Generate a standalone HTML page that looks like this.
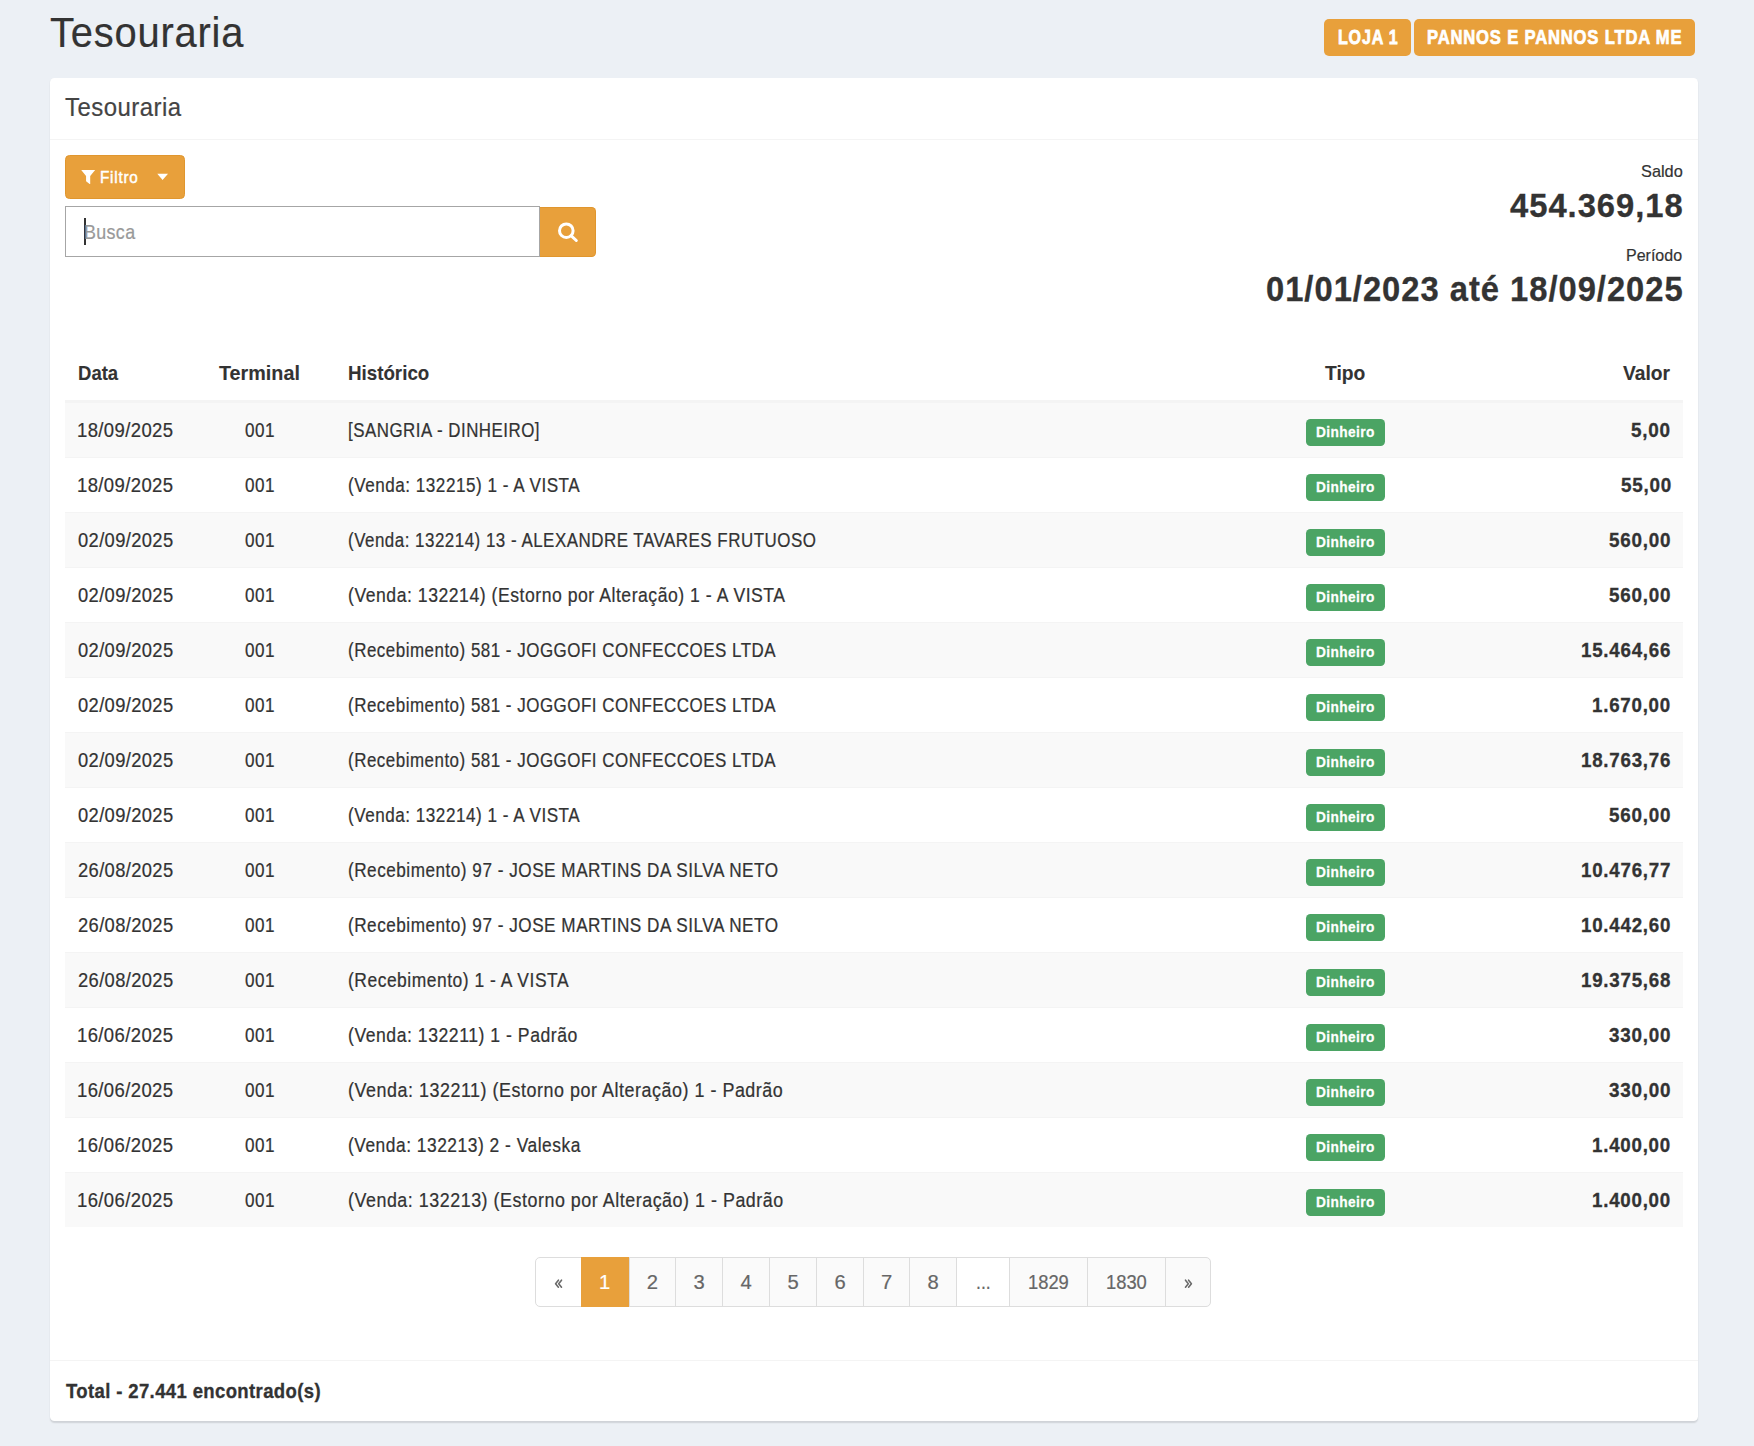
<!DOCTYPE html>
<html><head><meta charset="utf-8"><title>Tesouraria</title>
<style>
html,body{margin:0;padding:0}
body{width:1754px;height:1446px;background:#ecf0f5;position:relative;overflow:hidden;font-family:"Liberation Sans", sans-serif}
.t{position:absolute;white-space:nowrap;line-height:1;transform-origin:0 0}
</style></head><body>
<div style="position:absolute;left:1324px;top:19px;width:87px;height:37px;background:#e8a03b;border-radius:5px"></div>
<div style="position:absolute;left:1414px;top:19px;width:281px;height:37px;background:#e8a03b;border-radius:5px"></div>
<div style="position:absolute;left:50px;top:78px;width:1648px;height:1342.5px;background:#fff;border-radius:4.5px;box-shadow:0 1.5px 1.5px rgba(0,0,0,0.12)"></div>
<div style="position:absolute;left:50px;top:139px;width:1648px;height:1px;background:#f4f4f4"></div>
<div style="position:absolute;left:65px;top:155px;width:120px;height:44px;box-sizing:border-box;background:#e8a03b;border:1.5px solid #e0962e;border-radius:4.5px"></div>
<svg style="position:absolute;left:81px;top:170px" width="15" height="15" viewBox="0 0 15 15"><path d="M0.2 0 H14.15 L9.2 6.05 V14.1 L8.6 14.1 L5.07 11.2 V6.05 Z" fill="#fff"/></svg>
<svg style="position:absolute;left:157px;top:173px" width="12" height="8" viewBox="0 0 12 8"><path d="M0.26 0.8 H11 L5.6 6.9 Z" fill="#fff"/></svg>
<div style="position:absolute;left:65px;top:206px;width:475px;height:51px;box-sizing:border-box;background:#fff;border:1px solid #a6a6a6;border-width:1.2px 1px 1.2px 1.2px"></div>
<div style="position:absolute;left:84px;top:218px;width:2px;height:27px;background:#333"></div>
<div style="position:absolute;left:540px;top:207px;width:56px;height:50px;box-sizing:border-box;background:#e8a03b;border:1.2px solid #e0962e;border-left:0;border-radius:0 4.5px 4.5px 0"></div>
<svg style="position:absolute;left:555px;top:219px" width="26" height="26" viewBox="0 0 26 26"><circle cx="11.3" cy="11.7" r="6.8" fill="none" stroke="#fff" stroke-width="3"/><path d="M16.3 16.8 L21.3 21.5" stroke="#fff" stroke-width="3" stroke-linecap="round"/></svg>
<div style="position:absolute;left:65px;top:400px;width:1618px;height:3px;background:#f4f4f4"></div>
<div style="position:absolute;left:65px;top:403px;width:1618px;height:54px;background:#f9f9f9"></div>
<div style="position:absolute;left:1306px;top:419.00px;width:79px;height:27px;background:#4ba464;border-radius:4.5px"></div>
<div style="position:absolute;left:65px;top:457px;width:1618px;height:1px;background:#f4f4f4"></div>
<div style="position:absolute;left:1306px;top:474.00px;width:79px;height:27px;background:#4ba464;border-radius:4.5px"></div>
<div style="position:absolute;left:65px;top:513px;width:1618px;height:54px;background:#f9f9f9"></div>
<div style="position:absolute;left:65px;top:512px;width:1618px;height:1px;background:#f4f4f4"></div>
<div style="position:absolute;left:1306px;top:529.00px;width:79px;height:27px;background:#4ba464;border-radius:4.5px"></div>
<div style="position:absolute;left:65px;top:567px;width:1618px;height:1px;background:#f4f4f4"></div>
<div style="position:absolute;left:1306px;top:584.00px;width:79px;height:27px;background:#4ba464;border-radius:4.5px"></div>
<div style="position:absolute;left:65px;top:623px;width:1618px;height:54px;background:#f9f9f9"></div>
<div style="position:absolute;left:65px;top:622px;width:1618px;height:1px;background:#f4f4f4"></div>
<div style="position:absolute;left:1306px;top:639.00px;width:79px;height:27px;background:#4ba464;border-radius:4.5px"></div>
<div style="position:absolute;left:65px;top:677px;width:1618px;height:1px;background:#f4f4f4"></div>
<div style="position:absolute;left:1306px;top:694.00px;width:79px;height:27px;background:#4ba464;border-radius:4.5px"></div>
<div style="position:absolute;left:65px;top:733px;width:1618px;height:54px;background:#f9f9f9"></div>
<div style="position:absolute;left:65px;top:732px;width:1618px;height:1px;background:#f4f4f4"></div>
<div style="position:absolute;left:1306px;top:749.00px;width:79px;height:27px;background:#4ba464;border-radius:4.5px"></div>
<div style="position:absolute;left:65px;top:787px;width:1618px;height:1px;background:#f4f4f4"></div>
<div style="position:absolute;left:1306px;top:804.00px;width:79px;height:27px;background:#4ba464;border-radius:4.5px"></div>
<div style="position:absolute;left:65px;top:843px;width:1618px;height:54px;background:#f9f9f9"></div>
<div style="position:absolute;left:65px;top:842px;width:1618px;height:1px;background:#f4f4f4"></div>
<div style="position:absolute;left:1306px;top:859.00px;width:79px;height:27px;background:#4ba464;border-radius:4.5px"></div>
<div style="position:absolute;left:65px;top:897px;width:1618px;height:1px;background:#f4f4f4"></div>
<div style="position:absolute;left:1306px;top:914.00px;width:79px;height:27px;background:#4ba464;border-radius:4.5px"></div>
<div style="position:absolute;left:65px;top:953px;width:1618px;height:54px;background:#f9f9f9"></div>
<div style="position:absolute;left:65px;top:952px;width:1618px;height:1px;background:#f4f4f4"></div>
<div style="position:absolute;left:1306px;top:969.00px;width:79px;height:27px;background:#4ba464;border-radius:4.5px"></div>
<div style="position:absolute;left:65px;top:1007px;width:1618px;height:1px;background:#f4f4f4"></div>
<div style="position:absolute;left:1306px;top:1024.00px;width:79px;height:27px;background:#4ba464;border-radius:4.5px"></div>
<div style="position:absolute;left:65px;top:1063px;width:1618px;height:54px;background:#f9f9f9"></div>
<div style="position:absolute;left:65px;top:1062px;width:1618px;height:1px;background:#f4f4f4"></div>
<div style="position:absolute;left:1306px;top:1079.00px;width:79px;height:27px;background:#4ba464;border-radius:4.5px"></div>
<div style="position:absolute;left:65px;top:1117px;width:1618px;height:1px;background:#f4f4f4"></div>
<div style="position:absolute;left:1306px;top:1134.00px;width:79px;height:27px;background:#4ba464;border-radius:4.5px"></div>
<div style="position:absolute;left:65px;top:1173px;width:1618px;height:54px;background:#f9f9f9"></div>
<div style="position:absolute;left:65px;top:1172px;width:1618px;height:1px;background:#f4f4f4"></div>
<div style="position:absolute;left:1306px;top:1189.00px;width:79px;height:27px;background:#4ba464;border-radius:4.5px"></div>
<div style="position:absolute;left:535.30px;top:1257px;width:45.80px;height:49.5px;background:#fff;border-radius:5px 0 0 5px"></div>
<div style="position:absolute;left:629.00px;top:1257px;width:46.50px;height:49.5px;background:#fafafa;border-radius:0"></div>
<div style="position:absolute;left:628.50px;top:1257px;width:1px;height:49.5px;background:#ddd"></div>
<div style="position:absolute;left:675.50px;top:1257px;width:47.00px;height:49.5px;background:#fafafa;border-radius:0"></div>
<div style="position:absolute;left:675.00px;top:1257px;width:1px;height:49.5px;background:#ddd"></div>
<div style="position:absolute;left:722.50px;top:1257px;width:46.90px;height:49.5px;background:#fafafa;border-radius:0"></div>
<div style="position:absolute;left:722.00px;top:1257px;width:1px;height:49.5px;background:#ddd"></div>
<div style="position:absolute;left:769.40px;top:1257px;width:47.10px;height:49.5px;background:#fafafa;border-radius:0"></div>
<div style="position:absolute;left:768.90px;top:1257px;width:1px;height:49.5px;background:#ddd"></div>
<div style="position:absolute;left:816.50px;top:1257px;width:47.00px;height:49.5px;background:#fafafa;border-radius:0"></div>
<div style="position:absolute;left:816.00px;top:1257px;width:1px;height:49.5px;background:#ddd"></div>
<div style="position:absolute;left:863.50px;top:1257px;width:46.10px;height:49.5px;background:#fafafa;border-radius:0"></div>
<div style="position:absolute;left:863.00px;top:1257px;width:1px;height:49.5px;background:#ddd"></div>
<div style="position:absolute;left:909.60px;top:1257px;width:46.90px;height:49.5px;background:#fafafa;border-radius:0"></div>
<div style="position:absolute;left:909.10px;top:1257px;width:1px;height:49.5px;background:#ddd"></div>
<div style="position:absolute;left:956.50px;top:1257px;width:52.90px;height:49.5px;background:#fff;border-radius:0"></div>
<div style="position:absolute;left:956.00px;top:1257px;width:1px;height:49.5px;background:#ddd"></div>
<div style="position:absolute;left:1009.40px;top:1257px;width:78.30px;height:49.5px;background:#fafafa;border-radius:0"></div>
<div style="position:absolute;left:1008.90px;top:1257px;width:1px;height:49.5px;background:#ddd"></div>
<div style="position:absolute;left:1087.70px;top:1257px;width:77.90px;height:49.5px;background:#fafafa;border-radius:0"></div>
<div style="position:absolute;left:1087.20px;top:1257px;width:1px;height:49.5px;background:#ddd"></div>
<div style="position:absolute;left:1165.60px;top:1257px;width:45.80px;height:49.5px;background:#fafafa;border-radius:0 5px 5px 0"></div>
<div style="position:absolute;left:1165.10px;top:1257px;width:1px;height:49.5px;background:#ddd"></div>
<div style="position:absolute;left:535.3px;top:1257px;width:676.1px;height:49.5px;box-sizing:border-box;border:1px solid #ddd;border-top-width:1.3px;border-bottom-width:1.3px;border-radius:5px"></div>
<div style="position:absolute;left:580.80px;top:1256.8px;width:48.20px;height:49.9px;background:#e8a03b"></div>
<svg style="position:absolute;left:554px;top:1279px" width="10" height="10" viewBox="0 0 10 10"><path d="M4.4 1.2 L1.6 4.7 L4.4 8.2 M7.5 1.2 L4.7 4.7 L7.5 8.2" fill="none" stroke="#6a6a6a" stroke-width="1.6" stroke-linejoin="round" stroke-linecap="round"/></svg>
<svg style="position:absolute;left:1183px;top:1279px" width="10" height="10" viewBox="0 0 10 10"><path d="M2.5 1.2 L5.3 4.7 L2.5 8.2 M5.6 1.2 L8.4 4.7 L5.6 8.2" fill="none" stroke="#6a6a6a" stroke-width="1.6" stroke-linejoin="round" stroke-linecap="round"/></svg>
<div style="position:absolute;left:50px;top:1360px;width:1648px;height:1px;background:#f4f4f4"></div>
<div class="t" style="left:50.20px;top:10.90px;font-size:42.7px;font-weight:400;color:#333333;transform:scaleX(0.9346);letter-spacing:0.85px;-webkit-text-stroke:0.21px #333333">Tesouraria</div>
<div class="t" style="left:1338.00px;top:26.90px;font-size:20.5px;font-weight:700;color:#fff;transform:scaleX(0.7829);letter-spacing:1.03px;-webkit-text-stroke:0.77px #fff">LOJA 1</div>
<div class="t" style="left:1427.40px;top:26.90px;font-size:20.5px;font-weight:700;color:#fff;transform:scaleX(0.8091);letter-spacing:1.03px;-webkit-text-stroke:0.74px #fff">PANNOS E PANNOS LTDA ME</div>
<div class="t" style="left:65.00px;top:95.00px;font-size:25.3px;font-weight:400;color:#444;transform:scaleX(0.9470);letter-spacing:0.51px;-webkit-text-stroke:0.21px #444">Tesouraria</div>
<div class="t" style="left:100.00px;top:169.00px;font-size:17px;font-weight:400;color:#fff;transform:scaleX(0.8994);letter-spacing:0.85px;-webkit-text-stroke:0.50px #fff">Filtro</div>
<div class="t" style="left:83.61px;top:221.80px;font-size:20.2px;font-weight:400;color:#999;transform:scaleX(0.8852);letter-spacing:0.40px;-webkit-text-stroke:0.23px #999">Busca</div>
<div class="t" style="left:1640.60px;top:163.00px;font-size:16.4px;font-weight:400;color:#333333;transform:scaleX(0.9952);letter-spacing:0.00px;-webkit-text-stroke:0.20px #333333">Saldo</div>
<div class="t" style="left:1509.80px;top:188.00px;font-size:34px;font-weight:700;color:#333333;transform:scaleX(0.9633);letter-spacing:1.02px;-webkit-text-stroke:0.31px #333333">454.369,18</div>
<div class="t" style="left:1625.80px;top:247.00px;font-size:16.4px;font-weight:400;color:#333333;transform:scaleX(0.9759);letter-spacing:0.00px;-webkit-text-stroke:0.20px #333333">Período</div>
<div class="t" style="left:1265.65px;top:271.75px;font-size:34.3px;font-weight:700;color:#333333;transform:scaleX(0.9543);letter-spacing:1.03px;-webkit-text-stroke:0.31px #333333">01/01/2023 até 18/09/2025</div>
<div class="t" style="left:77.80px;top:363.00px;font-size:20.5px;font-weight:700;color:#333333;transform:scaleX(0.9044);letter-spacing:0.00px;-webkit-text-stroke:0.11px #333333">Data</div>
<div class="t" style="left:219.20px;top:363.00px;font-size:20.5px;font-weight:700;color:#333333;transform:scaleX(0.9643);letter-spacing:0.00px;-webkit-text-stroke:0.10px #333333">Terminal</div>
<div class="t" style="left:347.80px;top:363.00px;font-size:20.5px;font-weight:700;color:#333333;transform:scaleX(0.9146);letter-spacing:0.00px;-webkit-text-stroke:0.11px #333333">Histórico</div>
<div class="t" style="left:1325.30px;top:363.00px;font-size:20.5px;font-weight:700;color:#333333;transform:scaleX(0.9395);letter-spacing:0.00px;-webkit-text-stroke:0.11px #333333">Tipo</div>
<div class="t" style="left:1623.40px;top:363.00px;font-size:20.5px;font-weight:700;color:#333333;transform:scaleX(0.9392);letter-spacing:0.00px;-webkit-text-stroke:0.11px #333333">Valor</div>
<div class="t" style="left:65.60px;top:1381.00px;font-size:20.5px;font-weight:700;color:#333333;transform:scaleX(0.9033);letter-spacing:0.41px;-webkit-text-stroke:0.33px #333333">Total - 27.441 encontrado(s)</div>
<div class="t" style="left:76.90px;top:420.00px;font-size:20.5px;font-weight:400;color:#333333;transform:scaleX(0.9036);letter-spacing:0.41px;-webkit-text-stroke:0.22px #333333">18/09/2025</div>
<div class="t" style="left:244.50px;top:420.00px;font-size:20.5px;font-weight:400;color:#333333;transform:scaleX(0.8345);letter-spacing:0.61px;-webkit-text-stroke:0.24px #333333">001</div>
<div class="t" style="left:347.80px;top:420.00px;font-size:20.5px;font-weight:400;color:#333333;transform:scaleX(0.8234);letter-spacing:0.61px;-webkit-text-stroke:0.24px #333333">[SANGRIA - DINHEIRO]</div>
<div class="t" style="left:1316.40px;top:424.00px;font-size:15px;font-weight:700;color:#fff;transform:scaleX(0.9135);letter-spacing:0.45px;-webkit-text-stroke:0.27px #fff">Dinheiro</div>
<div class="t" style="left:1631.40px;top:420.00px;font-size:20.5px;font-weight:700;color:#333333;transform:scaleX(0.9232);letter-spacing:0.82px;-webkit-text-stroke:0.32px #333333">5,00</div>
<div class="t" style="left:76.90px;top:475.00px;font-size:20.5px;font-weight:400;color:#333333;transform:scaleX(0.9036);letter-spacing:0.41px;-webkit-text-stroke:0.22px #333333">18/09/2025</div>
<div class="t" style="left:244.50px;top:475.00px;font-size:20.5px;font-weight:400;color:#333333;transform:scaleX(0.8345);letter-spacing:0.61px;-webkit-text-stroke:0.24px #333333">001</div>
<div class="t" style="left:347.80px;top:475.00px;font-size:20.5px;font-weight:400;color:#333333;transform:scaleX(0.8346);letter-spacing:0.61px;-webkit-text-stroke:0.24px #333333">(Venda: 132215) 1 - A VISTA</div>
<div class="t" style="left:1316.40px;top:479.00px;font-size:15px;font-weight:700;color:#fff;transform:scaleX(0.9135);letter-spacing:0.45px;-webkit-text-stroke:0.27px #fff">Dinheiro</div>
<div class="t" style="left:1620.62px;top:475.00px;font-size:20.5px;font-weight:700;color:#333333;transform:scaleX(0.9208);letter-spacing:0.82px;-webkit-text-stroke:0.33px #333333">55,00</div>
<div class="t" style="left:77.80px;top:530.00px;font-size:20.5px;font-weight:400;color:#333333;transform:scaleX(0.8951);letter-spacing:0.41px;-webkit-text-stroke:0.22px #333333">02/09/2025</div>
<div class="t" style="left:244.50px;top:530.00px;font-size:20.5px;font-weight:400;color:#333333;transform:scaleX(0.8345);letter-spacing:0.61px;-webkit-text-stroke:0.24px #333333">001</div>
<div class="t" style="left:347.80px;top:530.00px;font-size:20.5px;font-weight:400;color:#333333;transform:scaleX(0.8257);letter-spacing:0.61px;-webkit-text-stroke:0.24px #333333">(Venda: 132214) 13 - ALEXANDRE TAVARES FRUTUOSO</div>
<div class="t" style="left:1316.40px;top:534.00px;font-size:15px;font-weight:700;color:#fff;transform:scaleX(0.9135);letter-spacing:0.45px;-webkit-text-stroke:0.27px #fff">Dinheiro</div>
<div class="t" style="left:1608.86px;top:530.00px;font-size:20.5px;font-weight:700;color:#333333;transform:scaleX(0.9201);letter-spacing:0.82px;-webkit-text-stroke:0.33px #333333">560,00</div>
<div class="t" style="left:77.80px;top:585.00px;font-size:20.5px;font-weight:400;color:#333333;transform:scaleX(0.8951);letter-spacing:0.41px;-webkit-text-stroke:0.22px #333333">02/09/2025</div>
<div class="t" style="left:244.50px;top:585.00px;font-size:20.5px;font-weight:400;color:#333333;transform:scaleX(0.8345);letter-spacing:0.61px;-webkit-text-stroke:0.24px #333333">001</div>
<div class="t" style="left:347.80px;top:585.00px;font-size:20.5px;font-weight:400;color:#333333;transform:scaleX(0.8592);letter-spacing:0.61px;-webkit-text-stroke:0.23px #333333">(Venda: 132214) (Estorno por Alteração) 1 - A VISTA</div>
<div class="t" style="left:1316.40px;top:589.00px;font-size:15px;font-weight:700;color:#fff;transform:scaleX(0.9135);letter-spacing:0.45px;-webkit-text-stroke:0.27px #fff">Dinheiro</div>
<div class="t" style="left:1608.86px;top:585.00px;font-size:20.5px;font-weight:700;color:#333333;transform:scaleX(0.9201);letter-spacing:0.82px;-webkit-text-stroke:0.33px #333333">560,00</div>
<div class="t" style="left:77.80px;top:640.00px;font-size:20.5px;font-weight:400;color:#333333;transform:scaleX(0.8951);letter-spacing:0.41px;-webkit-text-stroke:0.22px #333333">02/09/2025</div>
<div class="t" style="left:244.50px;top:640.00px;font-size:20.5px;font-weight:400;color:#333333;transform:scaleX(0.8345);letter-spacing:0.61px;-webkit-text-stroke:0.24px #333333">001</div>
<div class="t" style="left:347.80px;top:640.00px;font-size:20.5px;font-weight:400;color:#333333;transform:scaleX(0.8265);letter-spacing:0.61px;-webkit-text-stroke:0.24px #333333">(Recebimento) 581 - JOGGOFI CONFECCOES LTDA</div>
<div class="t" style="left:1316.40px;top:644.00px;font-size:15px;font-weight:700;color:#fff;transform:scaleX(0.9135);letter-spacing:0.45px;-webkit-text-stroke:0.27px #fff">Dinheiro</div>
<div class="t" style="left:1581.42px;top:640.00px;font-size:20.5px;font-weight:700;color:#333333;transform:scaleX(0.9141);letter-spacing:0.82px;-webkit-text-stroke:0.33px #333333">15.464,66</div>
<div class="t" style="left:77.80px;top:695.00px;font-size:20.5px;font-weight:400;color:#333333;transform:scaleX(0.8951);letter-spacing:0.41px;-webkit-text-stroke:0.22px #333333">02/09/2025</div>
<div class="t" style="left:244.50px;top:695.00px;font-size:20.5px;font-weight:400;color:#333333;transform:scaleX(0.8345);letter-spacing:0.61px;-webkit-text-stroke:0.24px #333333">001</div>
<div class="t" style="left:347.80px;top:695.00px;font-size:20.5px;font-weight:400;color:#333333;transform:scaleX(0.8265);letter-spacing:0.61px;-webkit-text-stroke:0.24px #333333">(Recebimento) 581 - JOGGOFI CONFECCOES LTDA</div>
<div class="t" style="left:1316.40px;top:699.00px;font-size:15px;font-weight:700;color:#fff;transform:scaleX(0.9135);letter-spacing:0.45px;-webkit-text-stroke:0.27px #fff">Dinheiro</div>
<div class="t" style="left:1592.20px;top:695.00px;font-size:20.5px;font-weight:700;color:#333333;transform:scaleX(0.9144);letter-spacing:0.82px;-webkit-text-stroke:0.33px #333333">1.670,00</div>
<div class="t" style="left:77.80px;top:750.00px;font-size:20.5px;font-weight:400;color:#333333;transform:scaleX(0.8951);letter-spacing:0.41px;-webkit-text-stroke:0.22px #333333">02/09/2025</div>
<div class="t" style="left:244.50px;top:750.00px;font-size:20.5px;font-weight:400;color:#333333;transform:scaleX(0.8345);letter-spacing:0.61px;-webkit-text-stroke:0.24px #333333">001</div>
<div class="t" style="left:347.80px;top:750.00px;font-size:20.5px;font-weight:400;color:#333333;transform:scaleX(0.8265);letter-spacing:0.61px;-webkit-text-stroke:0.24px #333333">(Recebimento) 581 - JOGGOFI CONFECCOES LTDA</div>
<div class="t" style="left:1316.40px;top:754.00px;font-size:15px;font-weight:700;color:#fff;transform:scaleX(0.9135);letter-spacing:0.45px;-webkit-text-stroke:0.27px #fff">Dinheiro</div>
<div class="t" style="left:1581.42px;top:750.00px;font-size:20.5px;font-weight:700;color:#333333;transform:scaleX(0.9141);letter-spacing:0.82px;-webkit-text-stroke:0.33px #333333">18.763,76</div>
<div class="t" style="left:77.80px;top:805.00px;font-size:20.5px;font-weight:400;color:#333333;transform:scaleX(0.8951);letter-spacing:0.41px;-webkit-text-stroke:0.22px #333333">02/09/2025</div>
<div class="t" style="left:244.50px;top:805.00px;font-size:20.5px;font-weight:400;color:#333333;transform:scaleX(0.8345);letter-spacing:0.61px;-webkit-text-stroke:0.24px #333333">001</div>
<div class="t" style="left:347.80px;top:805.00px;font-size:20.5px;font-weight:400;color:#333333;transform:scaleX(0.8346);letter-spacing:0.61px;-webkit-text-stroke:0.24px #333333">(Venda: 132214) 1 - A VISTA</div>
<div class="t" style="left:1316.40px;top:809.00px;font-size:15px;font-weight:700;color:#fff;transform:scaleX(0.9135);letter-spacing:0.45px;-webkit-text-stroke:0.27px #fff">Dinheiro</div>
<div class="t" style="left:1608.86px;top:805.00px;font-size:20.5px;font-weight:700;color:#333333;transform:scaleX(0.9201);letter-spacing:0.82px;-webkit-text-stroke:0.33px #333333">560,00</div>
<div class="t" style="left:77.80px;top:860.00px;font-size:20.5px;font-weight:400;color:#333333;transform:scaleX(0.8951);letter-spacing:0.41px;-webkit-text-stroke:0.22px #333333">26/08/2025</div>
<div class="t" style="left:244.50px;top:860.00px;font-size:20.5px;font-weight:400;color:#333333;transform:scaleX(0.8345);letter-spacing:0.61px;-webkit-text-stroke:0.24px #333333">001</div>
<div class="t" style="left:347.80px;top:860.00px;font-size:20.5px;font-weight:400;color:#333333;transform:scaleX(0.8365);letter-spacing:0.61px;-webkit-text-stroke:0.24px #333333">(Recebimento) 97 - JOSE MARTINS DA SILVA NETO</div>
<div class="t" style="left:1316.40px;top:864.00px;font-size:15px;font-weight:700;color:#fff;transform:scaleX(0.9135);letter-spacing:0.45px;-webkit-text-stroke:0.27px #fff">Dinheiro</div>
<div class="t" style="left:1581.42px;top:860.00px;font-size:20.5px;font-weight:700;color:#333333;transform:scaleX(0.9141);letter-spacing:0.82px;-webkit-text-stroke:0.33px #333333">10.476,77</div>
<div class="t" style="left:77.80px;top:915.00px;font-size:20.5px;font-weight:400;color:#333333;transform:scaleX(0.8951);letter-spacing:0.41px;-webkit-text-stroke:0.22px #333333">26/08/2025</div>
<div class="t" style="left:244.50px;top:915.00px;font-size:20.5px;font-weight:400;color:#333333;transform:scaleX(0.8345);letter-spacing:0.61px;-webkit-text-stroke:0.24px #333333">001</div>
<div class="t" style="left:347.80px;top:915.00px;font-size:20.5px;font-weight:400;color:#333333;transform:scaleX(0.8365);letter-spacing:0.61px;-webkit-text-stroke:0.24px #333333">(Recebimento) 97 - JOSE MARTINS DA SILVA NETO</div>
<div class="t" style="left:1316.40px;top:919.00px;font-size:15px;font-weight:700;color:#fff;transform:scaleX(0.9135);letter-spacing:0.45px;-webkit-text-stroke:0.27px #fff">Dinheiro</div>
<div class="t" style="left:1581.42px;top:915.00px;font-size:20.5px;font-weight:700;color:#333333;transform:scaleX(0.9141);letter-spacing:0.82px;-webkit-text-stroke:0.33px #333333">10.442,60</div>
<div class="t" style="left:77.80px;top:970.00px;font-size:20.5px;font-weight:400;color:#333333;transform:scaleX(0.8951);letter-spacing:0.41px;-webkit-text-stroke:0.22px #333333">26/08/2025</div>
<div class="t" style="left:244.50px;top:970.00px;font-size:20.5px;font-weight:400;color:#333333;transform:scaleX(0.8345);letter-spacing:0.61px;-webkit-text-stroke:0.24px #333333">001</div>
<div class="t" style="left:347.80px;top:970.00px;font-size:20.5px;font-weight:400;color:#333333;transform:scaleX(0.8508);letter-spacing:0.61px;-webkit-text-stroke:0.24px #333333">(Recebimento) 1 - A VISTA</div>
<div class="t" style="left:1316.40px;top:974.00px;font-size:15px;font-weight:700;color:#fff;transform:scaleX(0.9135);letter-spacing:0.45px;-webkit-text-stroke:0.27px #fff">Dinheiro</div>
<div class="t" style="left:1581.42px;top:970.00px;font-size:20.5px;font-weight:700;color:#333333;transform:scaleX(0.9141);letter-spacing:0.82px;-webkit-text-stroke:0.33px #333333">19.375,68</div>
<div class="t" style="left:76.90px;top:1025.00px;font-size:20.5px;font-weight:400;color:#333333;transform:scaleX(0.9036);letter-spacing:0.41px;-webkit-text-stroke:0.22px #333333">16/06/2025</div>
<div class="t" style="left:244.50px;top:1025.00px;font-size:20.5px;font-weight:400;color:#333333;transform:scaleX(0.8345);letter-spacing:0.61px;-webkit-text-stroke:0.24px #333333">001</div>
<div class="t" style="left:347.80px;top:1025.00px;font-size:20.5px;font-weight:400;color:#333333;transform:scaleX(0.8597);letter-spacing:0.61px;-webkit-text-stroke:0.23px #333333">(Venda: 132211) 1 - Padrão</div>
<div class="t" style="left:1316.40px;top:1029.00px;font-size:15px;font-weight:700;color:#fff;transform:scaleX(0.9135);letter-spacing:0.45px;-webkit-text-stroke:0.27px #fff">Dinheiro</div>
<div class="t" style="left:1608.86px;top:1025.00px;font-size:20.5px;font-weight:700;color:#333333;transform:scaleX(0.9201);letter-spacing:0.82px;-webkit-text-stroke:0.33px #333333">330,00</div>
<div class="t" style="left:76.90px;top:1080.00px;font-size:20.5px;font-weight:400;color:#333333;transform:scaleX(0.9036);letter-spacing:0.41px;-webkit-text-stroke:0.22px #333333">16/06/2025</div>
<div class="t" style="left:244.50px;top:1080.00px;font-size:20.5px;font-weight:400;color:#333333;transform:scaleX(0.8345);letter-spacing:0.61px;-webkit-text-stroke:0.24px #333333">001</div>
<div class="t" style="left:347.80px;top:1080.00px;font-size:20.5px;font-weight:400;color:#333333;transform:scaleX(0.8733);letter-spacing:0.61px;-webkit-text-stroke:0.23px #333333">(Venda: 132211) (Estorno por Alteração) 1 - Padrão</div>
<div class="t" style="left:1316.40px;top:1084.00px;font-size:15px;font-weight:700;color:#fff;transform:scaleX(0.9135);letter-spacing:0.45px;-webkit-text-stroke:0.27px #fff">Dinheiro</div>
<div class="t" style="left:1608.86px;top:1080.00px;font-size:20.5px;font-weight:700;color:#333333;transform:scaleX(0.9201);letter-spacing:0.82px;-webkit-text-stroke:0.33px #333333">330,00</div>
<div class="t" style="left:76.90px;top:1135.00px;font-size:20.5px;font-weight:400;color:#333333;transform:scaleX(0.9036);letter-spacing:0.41px;-webkit-text-stroke:0.22px #333333">16/06/2025</div>
<div class="t" style="left:244.50px;top:1135.00px;font-size:20.5px;font-weight:400;color:#333333;transform:scaleX(0.8345);letter-spacing:0.61px;-webkit-text-stroke:0.24px #333333">001</div>
<div class="t" style="left:347.80px;top:1135.00px;font-size:20.5px;font-weight:400;color:#333333;transform:scaleX(0.8473);letter-spacing:0.61px;-webkit-text-stroke:0.24px #333333">(Venda: 132213) 2 - Valeska</div>
<div class="t" style="left:1316.40px;top:1139.00px;font-size:15px;font-weight:700;color:#fff;transform:scaleX(0.9135);letter-spacing:0.45px;-webkit-text-stroke:0.27px #fff">Dinheiro</div>
<div class="t" style="left:1592.20px;top:1135.00px;font-size:20.5px;font-weight:700;color:#333333;transform:scaleX(0.9144);letter-spacing:0.82px;-webkit-text-stroke:0.33px #333333">1.400,00</div>
<div class="t" style="left:76.90px;top:1190.00px;font-size:20.5px;font-weight:400;color:#333333;transform:scaleX(0.9036);letter-spacing:0.41px;-webkit-text-stroke:0.22px #333333">16/06/2025</div>
<div class="t" style="left:244.50px;top:1190.00px;font-size:20.5px;font-weight:400;color:#333333;transform:scaleX(0.8345);letter-spacing:0.61px;-webkit-text-stroke:0.24px #333333">001</div>
<div class="t" style="left:347.80px;top:1190.00px;font-size:20.5px;font-weight:400;color:#333333;transform:scaleX(0.8715);letter-spacing:0.61px;-webkit-text-stroke:0.23px #333333">(Venda: 132213) (Estorno por Alteração) 1 - Padrão</div>
<div class="t" style="left:1316.40px;top:1194.00px;font-size:15px;font-weight:700;color:#fff;transform:scaleX(0.9135);letter-spacing:0.45px;-webkit-text-stroke:0.27px #fff">Dinheiro</div>
<div class="t" style="left:1592.20px;top:1190.00px;font-size:20.5px;font-weight:700;color:#333333;transform:scaleX(0.9144);letter-spacing:0.82px;-webkit-text-stroke:0.33px #333333">1.400,00</div>
<div class="t" style="left:599.05px;top:1272.00px;font-size:20.2px;font-weight:400;color:#fff;transform:scaleX(1.0000);letter-spacing:0.00px;-webkit-text-stroke:0.20px #fff">1</div>
<div class="t" style="left:646.75px;top:1272.00px;font-size:20.2px;font-weight:400;color:#666;transform:scaleX(1.0000);letter-spacing:0.00px;-webkit-text-stroke:0.20px #666">2</div>
<div class="t" style="left:693.50px;top:1272.00px;font-size:20.2px;font-weight:400;color:#666;transform:scaleX(1.0000);letter-spacing:0.00px;-webkit-text-stroke:0.20px #666">3</div>
<div class="t" style="left:740.45px;top:1272.00px;font-size:20.2px;font-weight:400;color:#666;transform:scaleX(1.0000);letter-spacing:0.00px;-webkit-text-stroke:0.20px #666">4</div>
<div class="t" style="left:787.45px;top:1272.00px;font-size:20.2px;font-weight:400;color:#666;transform:scaleX(1.0000);letter-spacing:0.00px;-webkit-text-stroke:0.20px #666">5</div>
<div class="t" style="left:834.50px;top:1272.00px;font-size:20.2px;font-weight:400;color:#666;transform:scaleX(1.0000);letter-spacing:0.00px;-webkit-text-stroke:0.20px #666">6</div>
<div class="t" style="left:881.05px;top:1272.00px;font-size:20.2px;font-weight:400;color:#666;transform:scaleX(1.0000);letter-spacing:0.00px;-webkit-text-stroke:0.20px #666">7</div>
<div class="t" style="left:927.55px;top:1272.00px;font-size:20.2px;font-weight:400;color:#666;transform:scaleX(1.0000);letter-spacing:0.00px;-webkit-text-stroke:0.20px #666">8</div>
<div class="t" style="left:975.53px;top:1272.00px;font-size:20.2px;font-weight:400;color:#666;transform:scaleX(0.8733);letter-spacing:0.00px;-webkit-text-stroke:0.23px #666">...</div>
<div class="t" style="left:1027.64px;top:1272.00px;font-size:20.2px;font-weight:400;color:#666;transform:scaleX(0.9091);letter-spacing:0.00px;-webkit-text-stroke:0.22px #666">1829</div>
<div class="t" style="left:1105.74px;top:1272.00px;font-size:20.2px;font-weight:400;color:#666;transform:scaleX(0.9091);letter-spacing:0.00px;-webkit-text-stroke:0.22px #666">1830</div>
</body></html>
